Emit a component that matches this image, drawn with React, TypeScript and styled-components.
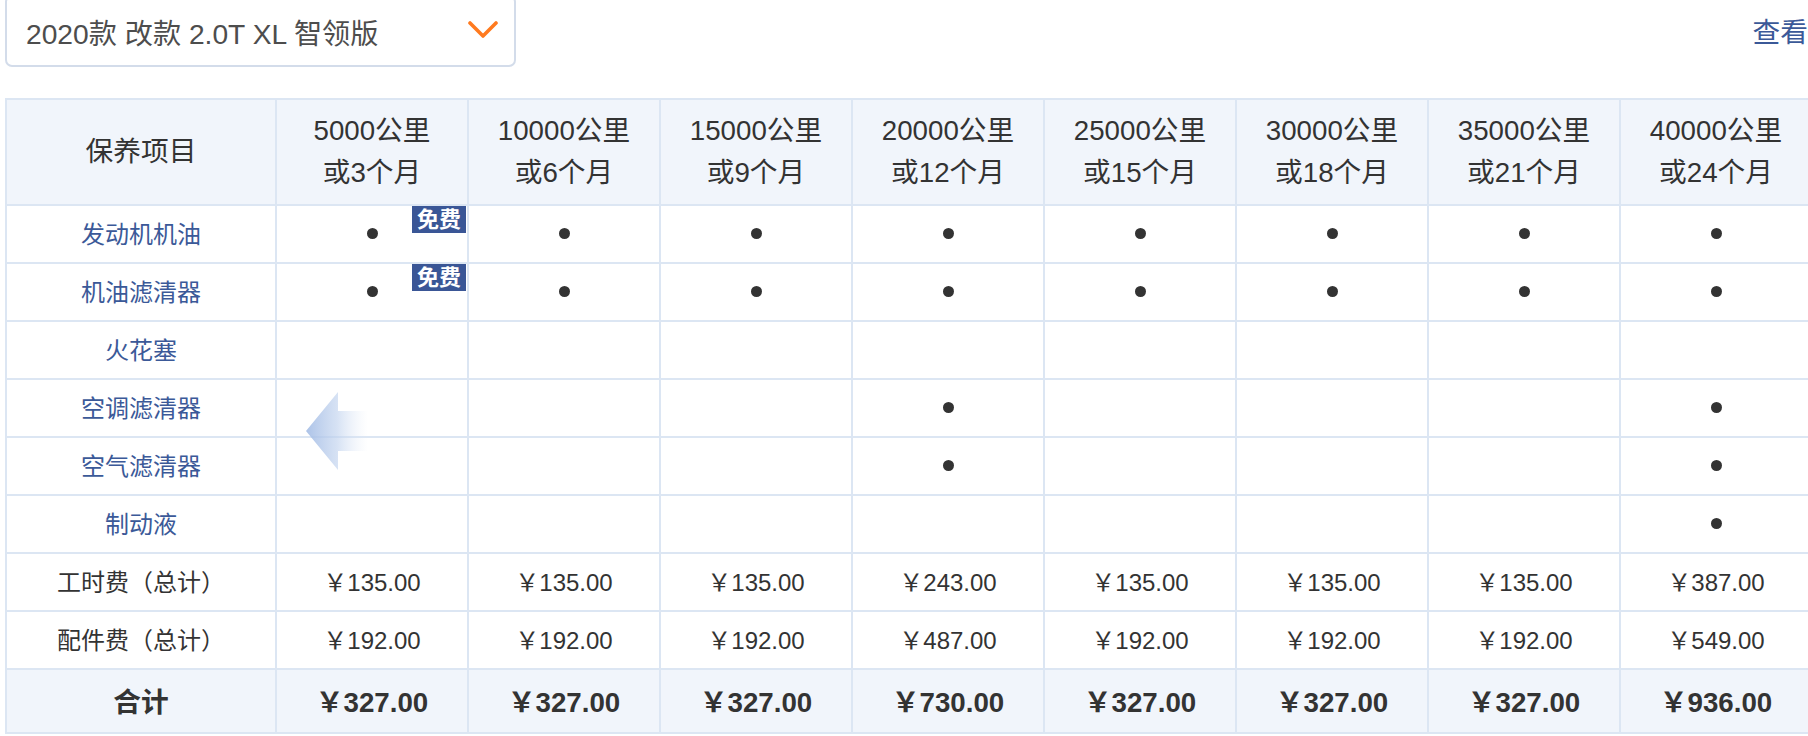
import React from "react";
import styled, { createGlobalStyle } from "styled-components";

const GlobalStyle = createGlobalStyle`
  html, body {
    margin: 0;
    padding: 0;
    background: #ffffff;
    overflow: hidden;
  }
  body {
    font-family: "Liberation Sans", "Noto Sans CJK SC", sans-serif;
    color: #333333;
  }
`;

const LINE = "#dce6f3";
const HEAD_BG = "#f1f5fb";
const BLUE = "#3b5998";

const Page = styled.div`
  padding-left: 5px;
  margin-top: -5px;
  width: max-content;
`;

const TopBar = styled.div`
  display: flex;
  align-items: center;
  justify-content: space-between;
  height: 72px;
  margin-bottom: 31px;
`;

const Select = styled.div`
  box-sizing: border-box;
  width: 511px;
  height: 72px;
  border: 2px solid #d3dcea;
  border-radius: 7px;
  display: flex;
  align-items: center;
  justify-content: space-between;
  padding: 0 16px 0 19px;
  font-size: 28.2px;
  color: #4d4d4d;
`;

const Chevron = styled.svg`
  width: 30px;
  height: 17px;
  margin-top: -4px;
`;

const MoreLink = styled.a`
  font-size: 27.7px;
  color: ${BLUE};
  text-decoration: none;
  margin-right: 5px;
  margin-top: -2px;
`;

const TableWrap = styled.div`
  position: relative;
`;

const Table = styled.div`
  display: grid;
  grid-template-columns: 268px repeat(8, 190px);
  gap: 2px;
  padding: 2px;
  background: ${LINE};
  width: max-content;
`;

const HeadCell = styled.div`
  background: ${HEAD_BG};
  height: 104px;
  display: flex;
  align-items: center;
  justify-content: center;
  text-align: center;
  font-size: 27.7px;
  line-height: 1.5;
  color: #333333;
`;

const Cell = styled.div<{ $kind?: "item" | "fee" }>`
  position: relative;
  box-sizing: border-box;
  background: #ffffff;
  height: 56px;
  padding-bottom: 4px;
  display: flex;
  align-items: center;
  justify-content: center;
  font-size: 24px;
  color: ${(p) => (p.$kind === "item" ? BLUE : "#333333")};
`;

const TotalCell = styled.div`
  box-sizing: border-box;
  background: ${HEAD_BG};
  height: 62px;
  padding-bottom: 3px;
  display: flex;
  align-items: center;
  justify-content: center;
  font-size: 27.7px;
  font-weight: bold;
  color: #333333;
`;

const Dot = styled.span`
  width: 11px;
  height: 11px;
  border-radius: 50%;
  background: #333333;
  margin-left: 1px;
  margin-top: 2px;
`;

const Badge = styled.span`
  position: absolute;
  top: 0;
  right: 1px;
  height: 27px;
  padding: 0 5px;
  background: #3a5696;
  color: #ffffff;
  font-size: 22px;
  font-weight: bold;
  line-height: 27px;
`;

const ScrollHint = styled.svg`
  position: absolute;
  left: 299px;
  top: 293px;
  width: 64px;
  height: 80px;
  pointer-events: none;
`;

const intervals = [
  [5000, 3],
  [10000, 6],
  [15000, 9],
  [20000, 12],
  [25000, 15],
  [30000, 18],
  [35000, 21],
  [40000, 24],
];

const items: { name: string; cols: number[]; free?: number[] }[] = [
  { name: "发动机机油", cols: [0, 1, 2, 3, 4, 5, 6, 7], free: [0] },
  { name: "机油滤清器", cols: [0, 1, 2, 3, 4, 5, 6, 7], free: [0] },
  { name: "火花塞", cols: [] },
  { name: "空调滤清器", cols: [3, 7] },
  { name: "空气滤清器", cols: [3, 7] },
  { name: "制动液", cols: [7] },
];

const labor = ["135.00", "135.00", "135.00", "243.00", "135.00", "135.00", "135.00", "387.00"];
const parts = ["192.00", "192.00", "192.00", "487.00", "192.00", "192.00", "192.00", "549.00"];
const totals = ["327.00", "327.00", "327.00", "730.00", "327.00", "327.00", "327.00", "936.00"];

export default function App() {
  return (
    <>
      <GlobalStyle />
      <Page>
        <TopBar>
          <Select>
            <span>2020款 改款 2.0T XL 智领版</span>
            <Chevron viewBox="0 0 30 17">
              <polyline
                points="2,2 15,15 28,2"
                fill="none"
                stroke="#ff7a1f"
                strokeWidth="3.6"
                strokeLinecap="round"
                strokeLinejoin="round"
              />
            </Chevron>
          </Select>
          <MoreLink href="#">查看</MoreLink>
        </TopBar>
        <TableWrap>
          <Table>
            <HeadCell>保养项目</HeadCell>
            {intervals.map(([km, m]) => (
              <HeadCell key={km}>
                {km}公里
                <br />
                或{m}个月
              </HeadCell>
            ))}
            {items.map((it) => (
              <React.Fragment key={it.name}>
                <Cell $kind="item">{it.name}</Cell>
                {intervals.map((_, i) => (
                  <Cell key={i}>
                    {it.cols.includes(i) && <Dot />}
                    {it.free?.includes(i) && <Badge>免费</Badge>}
                  </Cell>
                ))}
              </React.Fragment>
            ))}
            <Cell $kind="fee">工时费（总计）</Cell>
            {labor.map((v, i) => (
              <Cell key={i} $kind="fee">￥{v}</Cell>
            ))}
            <Cell $kind="fee">配件费（总计）</Cell>
            {parts.map((v, i) => (
              <Cell key={i} $kind="fee">￥{v}</Cell>
            ))}
            <TotalCell>合计</TotalCell>
            {totals.map((v, i) => (
              <TotalCell key={i}>￥{v}</TotalCell>
            ))}
          </Table>
          <ScrollHint viewBox="0 0 64 80">
            <defs>
              <linearGradient id="hintGrad" x1="0" y1="0" x2="1" y2="0">
                <stop offset="0" stopColor="#a3bce5" stopOpacity="0.9" />
                <stop offset="0.5" stopColor="#c0d2ee" stopOpacity="0.65" />
                <stop offset="1" stopColor="#dfe8f6" stopOpacity="0" />
              </linearGradient>
            </defs>
            <polygon points="2,40 34,1 34,20 64,20 64,60 34,60 34,79" fill="url(#hintGrad)" />
          </ScrollHint>
        </TableWrap>
      </Page>
    </>
  );
}
